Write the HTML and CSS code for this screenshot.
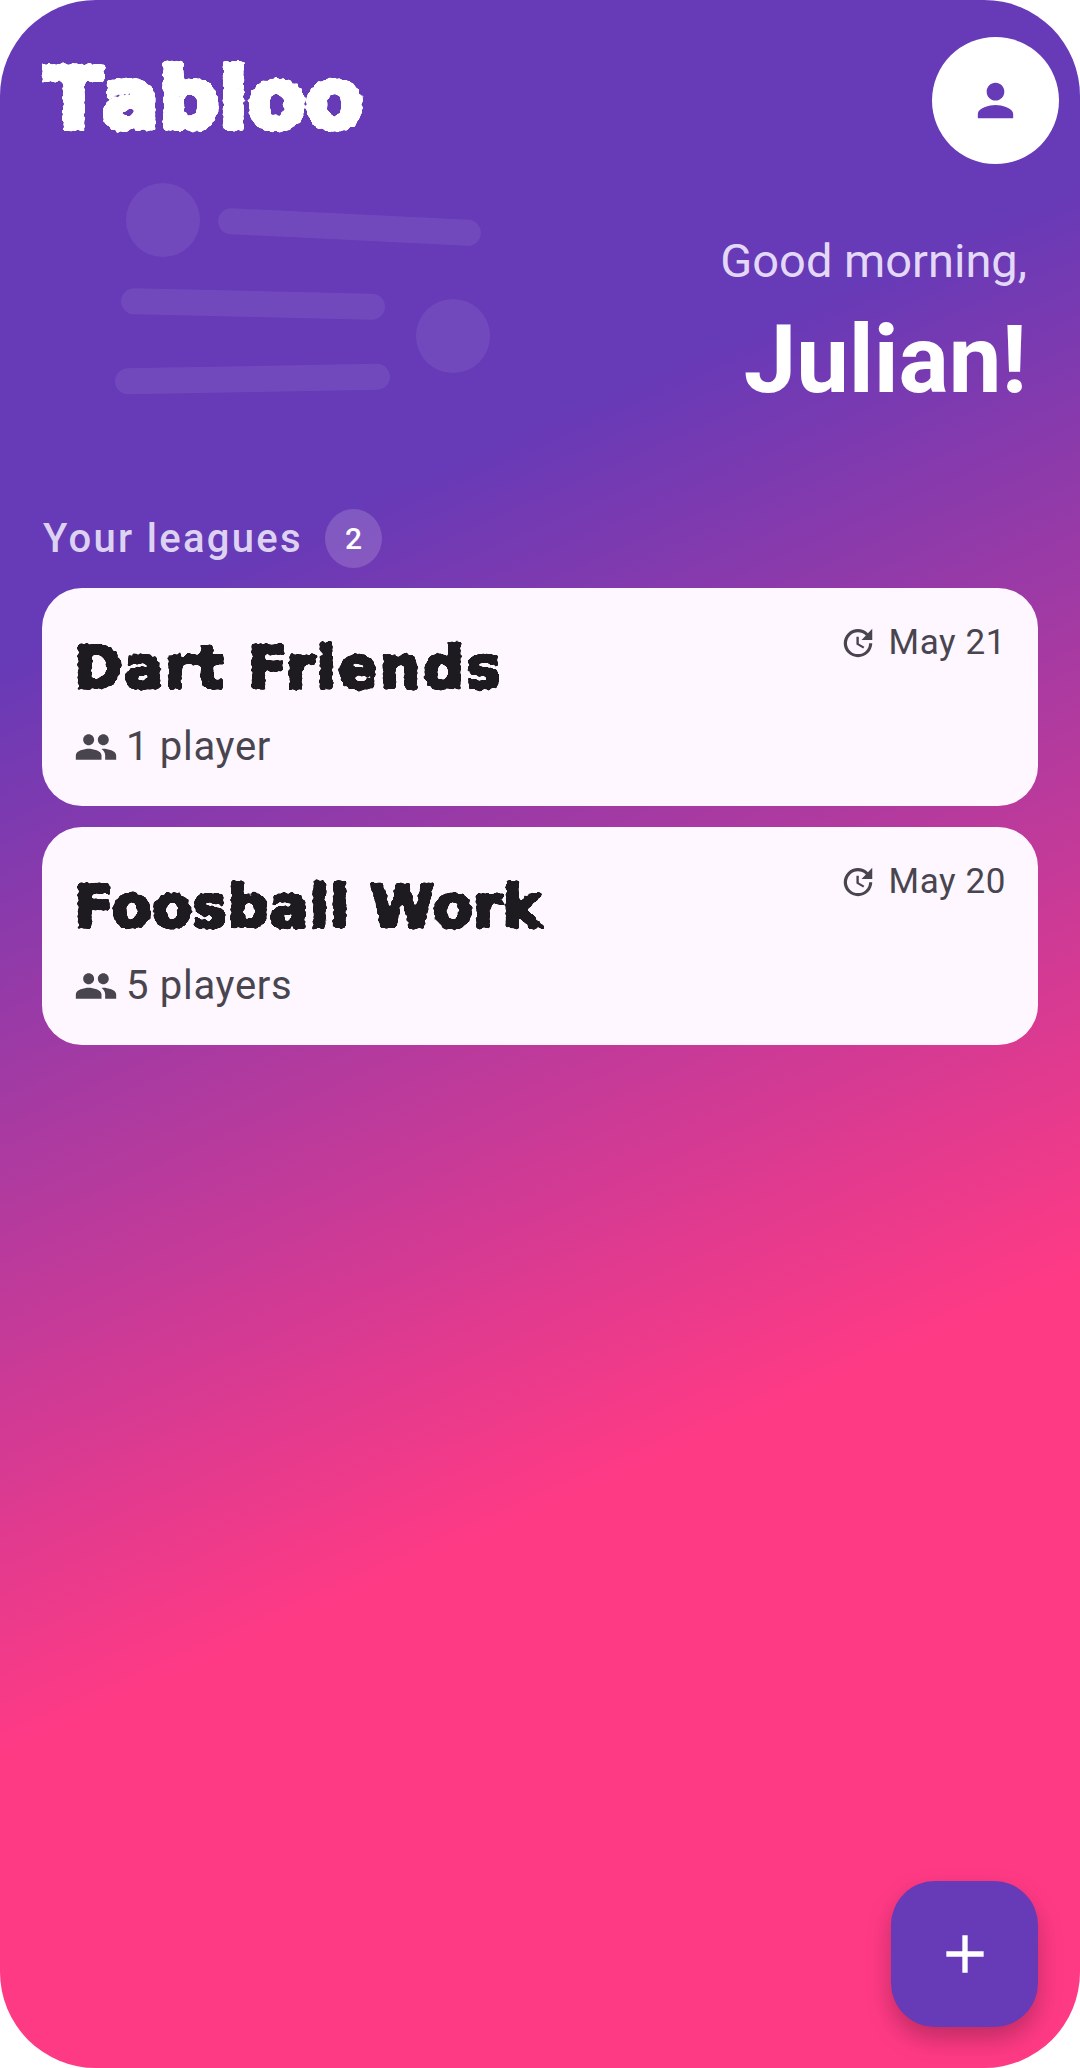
FILE: index.html
```html
<!DOCTYPE html>
<html lang="en">
<head>
    <meta charset="UTF-8">
    <meta name="viewport" content="width=device-width, initial-scale=1.0">
    <title>Tabloo</title>
    <link rel="stylesheet" href="styles.css">
</head>

<body>
    <svg class="defs" width="0" height="0" aria-hidden="true">
        <filter id="frill" x="-5%" y="-15%" width="110%" height="130%" color-interpolation-filters="sRGB">
            <feGaussianBlur in="SourceAlpha" stdDeviation="1.2" result="soft"/>
            <feTurbulence type="fractalNoise" baseFrequency="0.24" numOctaves="1" seed="4" result="noise"/>
            <feColorMatrix in="noise" type="matrix" values="0 0 0 0 0  0 0 0 0 0  0 0 0 0 0  1 0 0 0 0" result="bumps"/>
            <feComposite in="soft" in2="bumps" operator="arithmetic" k1="0" k2="1" k3="1.4" k4="-0.7" result="mix"/>
            <feComponentTransfer in="mix" result="mask">
                <feFuncA type="linear" slope="6" intercept="-2.5"/>
            </feComponentTransfer>
            <feMorphology in="SourceGraphic" operator="dilate" radius="6" result="fat"/>
            <feComposite in="fat" in2="mask" operator="in"/>
        </filter>
    </svg>

    <main class="screen">
        <svg class="decor" width="1080" height="420" viewBox="0 0 1080 420" aria-hidden="true">
            <circle cx="163" cy="220" r="37"/>
            <rect x="218" y="214" width="263" height="26" rx="13" transform="rotate(2.8 349 227)"/>
            <rect x="121" y="291" width="264" height="26" rx="13" transform="rotate(1.3 253 304)"/>
            <circle cx="453" cy="336" r="37"/>
            <rect x="115" y="366" width="275" height="26" rx="13" transform="rotate(-1 253 379)"/>
        </svg>

        <header class="top-bar">
            <div class="logo">Tabloo</div>
            <button class="avatar" type="button">
                <svg width="53" height="53" viewBox="0 0 24 24"><path d="M12 12c2.21 0 4-1.79 4-4s-1.79-4-4-4-4 1.79-4 4 1.79 4 4 4zm0 2c-2.67 0-8 1.34-8 4v2h16v-2c0-2.66-5.33-4-8-4z"/></svg>
            </button>
        </header>

        <section class="greeting">
            <p class="greeting-small">Good morning,</p>
            <p class="greeting-name">Julian!</p>
        </section>

        <div class="section-title">
            <span>Your leagues</span>
            <span class="count">2</span>
        </div>

        <div class="league-list">
            <article class="league-card">
                <div class="card-date">
                    <svg width="38" height="38" viewBox="0 0 24 24"><path d="M21 10.12h-6.78l2.74-2.82c-2.73-2.7-7.15-2.8-9.88-.1-2.73 2.71-2.73 7.08 0 9.79s7.15 2.71 9.88 0C18.32 15.65 19 14.08 19 12.1h2c0 1.98-.88 4.55-2.64 6.29-3.51 3.48-9.21 3.48-12.72 0-3.5-3.47-3.53-9.11-.02-12.58s9.14-3.47 12.65 0L21 3v7.12zM12.5 8v4.25l3.5 2.08-.72 1.21L11 13V8h1.5z"/></svg>
                    <span>May 21</span>
                </div>
                <h2 class="card-title">Dart Friends</h2>
                <div class="card-players">
                    <svg width="44" height="44" viewBox="0 0 24 24"><path d="M16 11c1.66 0 2.99-1.34 2.99-3S17.66 5 16 5c-1.66 0-3 1.34-3 3s1.34 3 3 3zm-8 0c1.66 0 2.99-1.34 2.99-3S9.66 5 8 5C6.34 5 5 6.34 5 8s1.34 3 3 3zm0 2c-2.33 0-7 1.17-7 3.5V19h14v-2.5c0-2.33-4.67-3.5-7-3.5zm8 0c-.29 0-.62.02-.97.05 1.16.84 1.97 1.97 1.97 3.45V19h6v-2.5c0-2.33-4.67-3.5-7-3.5z"/></svg>
                    <span>1 player</span>
                </div>
            </article>

            <article class="league-card">
                <div class="card-date">
                    <svg width="38" height="38" viewBox="0 0 24 24"><path d="M21 10.12h-6.78l2.74-2.82c-2.73-2.7-7.15-2.8-9.88-.1-2.73 2.71-2.73 7.08 0 9.79s7.15 2.71 9.88 0C18.32 15.65 19 14.08 19 12.1h2c0 1.98-.88 4.55-2.64 6.29-3.51 3.48-9.21 3.48-12.72 0-3.5-3.47-3.53-9.11-.02-12.58s9.14-3.47 12.65 0L21 3v7.12zM12.5 8v4.25l3.5 2.08-.72 1.21L11 13V8h1.5z"/></svg>
                    <span>May 20</span>
                </div>
                <h2 class="card-title card-title-tight">Foosball Work</h2>
                <div class="card-players">
                    <svg width="44" height="44" viewBox="0 0 24 24"><path d="M16 11c1.66 0 2.99-1.34 2.99-3S17.66 5 16 5c-1.66 0-3 1.34-3 3s1.34 3 3 3zm-8 0c1.66 0 2.99-1.34 2.99-3S9.66 5 8 5C6.34 5 5 6.34 5 8s1.34 3 3 3zm0 2c-2.33 0-7 1.17-7 3.5V19h14v-2.5c0-2.33-4.67-3.5-7-3.5zm8 0c-.29 0-.62.02-.97.05 1.16.84 1.97 1.97 1.97 3.45V19h6v-2.5c0-2.33-4.67-3.5-7-3.5z"/></svg>
                    <span>5 players</span>
                </div>
            </article>
        </div>

        <button class="fab" type="button">
            <svg width="64" height="64" viewBox="0 0 24 24"><path d="M19 13h-6v6h-2v-6H5v-2h6V5h2v6h6v2z"/></svg>
        </button>
    </main>
</body>
</html>
```

FILE: styles.css
```css
* {
    box-sizing: border-box;
}

body {
    margin: 0;
    background: #ffffff;
    font-family: 'Roboto', sans-serif;
}

.defs {
    position: absolute;
}

.screen {
    position: relative;
    height: 2068px;
    padding: 37px 42px 0;
    border-radius: 96px;
    overflow: hidden;
    background: linear-gradient(156deg, #673ab7 26%, #ff3a85 69%);
}

.decor {
    position: absolute;
    top: 0;
    left: 0;
    fill: rgba(255, 255, 255, 0.08);
}

.top-bar {
    position: relative;
    display: flex;
    justify-content: space-between;
    align-items: flex-start;
    margin-right: -21px;
}

.logo {
    margin-top: 12px;
    margin-left: 3px;
    font-family: 'DejaVu Sans', sans-serif;
    font-weight: 700;
    font-size: 84px;
    line-height: 100px;
    font-kerning: none;
    color: #ffffff;
    -webkit-text-stroke: 6px #ffffff;
    filter: url(#frill);
}

.avatar {
    display: flex;
    justify-content: center;
    align-items: center;
    width: 127px;
    height: 127px;
    padding: 0;
    border: none;
    border-radius: 50%;
    background: #ffffff;
    fill: #673ab7;
}

.greeting {
    position: relative;
    padding-right: 11px;
    text-align: right;
}

.greeting p {
    margin: 0;
}

.greeting-small {
    margin-top: 71px !important;
    font-size: 47px;
    line-height: 52px;
    color: #e3d8f5;
}

.greeting-name {
    margin-top: 19px !important;
    font-size: 94px;
    font-weight: 700;
    line-height: 108px;
    color: #ffffff;
}

.section-title {
    position: relative;
    display: flex;
    align-items: center;
    gap: 22px;
    margin-top: 95px;
    padding-left: 1px;
    font-size: 40px;
    font-weight: 500;
    letter-spacing: 2.3px;
    color: #ddd2f1;
}

.count {
    display: flex;
    justify-content: center;
    align-items: center;
    width: 57px;
    height: 59px;
    border-radius: 50%;
    background: rgba(255, 255, 255, 0.16);
    font-size: 30px;
    letter-spacing: 0;
    color: #ffffff;
}

.league-list {
    display: flex;
    flex-direction: column;
    gap: 21px;
    margin-top: 20px;
}

.league-card {
    position: relative;
    height: 218px;
    padding: 46px 32px 0;
    border-radius: 40px;
    background: #fef7ff;
}

.card-date {
    position: absolute;
    top: 34px;
    right: 32px;
    display: flex;
    align-items: center;
    gap: 11px;
    font-size: 35px;
    letter-spacing: 0.6px;
    color: #49454f;
    fill: #49454f;
}

.card-title {
    margin: 0;
    font-family: 'DejaVu Sans', sans-serif;
    font-weight: 700;
    font-size: 58px;
    line-height: 68px;
    letter-spacing: 2px;
    color: #1d1b20;
    -webkit-text-stroke: 3px #1d1b20;
    filter: url(#frill);
}

.card-title-tight {
    letter-spacing: 0.5px;
}

.card-players {
    display: flex;
    align-items: center;
    gap: 8px;
    margin-top: 21px;
    font-size: 40px;
    letter-spacing: 0.7px;
    color: #49454f;
    fill: #49454f;
}

.fab {
    position: absolute;
    right: 42px;
    bottom: 41px;
    display: flex;
    justify-content: center;
    align-items: center;
    width: 147px;
    height: 146px;
    padding: 0;
    border: none;
    border-radius: 44px;
    background: #673ab7;
    fill: #ffffff;
    box-shadow: 0 12px 24px rgba(0, 0, 0, 0.25);
}
```
